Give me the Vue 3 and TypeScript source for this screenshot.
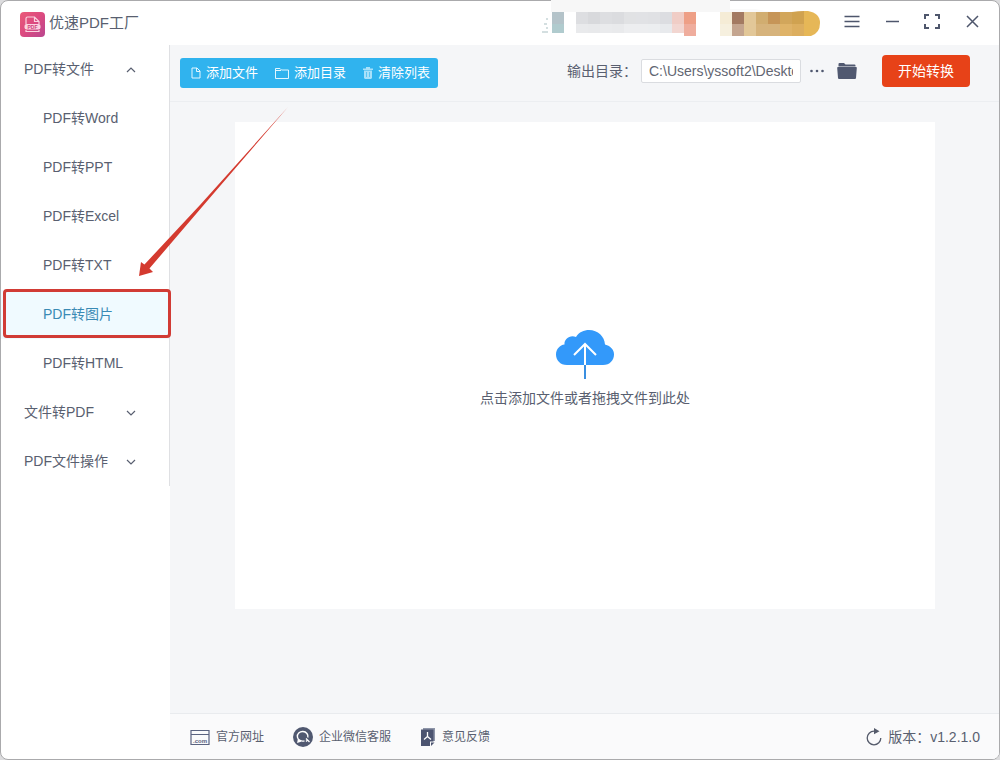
<script setup lang="ts">
import { ref } from 'vue'

interface NavGroup {
  title: string
  open: boolean
  items: string[]
}

interface Tile {
  x: number
  top: string
  bottom: string
}

const groups = ref<NavGroup[]>([
  {
    title: 'PDF转文件',
    open: true,
    items: ['PDF转Word', 'PDF转PPT', 'PDF转Excel', 'PDF转TXT', 'PDF转图片', 'PDF转HTML'],
  },
  { title: '文件转PDF', open: false, items: [] },
  { title: 'PDF文件操作', open: false, items: [] },
])
const active = ref('PDF转图片')
const outputDir = ref('C:\\Users\\yssoft2\\Desktop')

const nameTiles: Tile[] = [
  { x: 36, top: '#dddee1', bottom: '#e9eaec' },
  { x: 48, top: '#d8d9dc', bottom: '#e8e9eb' },
  { x: 60, top: '#dddee1', bottom: '#eaebed' },
  { x: 72, top: '#dbdcdf', bottom: '#e9eaec' },
  { x: 84, top: '#e1e2e4', bottom: '#edeef0' },
  { x: 96, top: '#e1e2e5', bottom: '#edeef0' },
  { x: 108, top: '#e0e1e4', bottom: '#eceef0' },
  { x: 120, top: '#dcdde1', bottom: '#e8eaed' },
  { x: 132, top: '#f0cdc6', bottom: '#f2d6d1' },
  { x: 144, top: '#ee9f86', bottom: '#efad9d' },
]
const badgeTiles: Tile[] = [
  { x: 180, top: '#f5ecd6', bottom: '#f6f0df' },
  { x: 192, top: '#a37a62', bottom: '#c4a58f' },
  { x: 204, top: '#e2c798', bottom: '#e2c798' },
  { x: 216, top: '#d1ad70', bottom: '#d6b37c' },
  { x: 228, top: '#c69558', bottom: '#d6b37c' },
  { x: 240, top: '#d2a65b', bottom: '#dfb368' },
  { x: 252, top: '#d0a250', bottom: '#dcae5f' },
]
</script>

<template>
  <div class="desktop">
    <div class="window">
      <header class="titlebar">
        <svg class="logo" width="25" height="25" viewBox="0 0 25 25" aria-hidden="true">
          <defs>
            <linearGradient id="logo-fill" x1="0" y1="0" x2="1" y2="1">
              <stop offset="0" stop-color="#ea5a78" />
              <stop offset="0.5" stop-color="#dc4a80" />
              <stop offset="1" stop-color="#b8468f" />
            </linearGradient>
          </defs>
          <rect width="25" height="25" rx="4" fill="url(#logo-fill)" />
          <path d="M6 12V6.500Q6 5 7.500 5H14.500L19 9.500V12M14.500 5V9.500H19M6 18V19.500H19V18" fill="none" stroke="#fbd3e0" stroke-width="1.200" />
          <rect x="4.500" y="12" width="16" height="5.500" rx="2" fill="#fbd3e0" />
          <text x="12.500" y="16.700" text-anchor="middle" font-family="Liberation Sans, sans-serif" font-size="5" font-weight="bold" fill="#cf3f78">PDF</text>
        </svg>
        <h1 class="app-name">优速PDF工厂</h1>
        <svg class="account" width="282" height="44" viewBox="0 0 282 44" aria-hidden="true">
          <path d="M11 0H190V12H11Z" fill="#f7f7f7" />
          <path d="M190 9H215L232 12H190Z" fill="#fafafa" />
          <path d="M6 19H8M4 24H7M6 28H8M2 32H8" stroke="#a9bfc2" fill="none" />
          <rect x="12" y="12" width="12" height="12" fill="#b4c3c9" />
          <rect x="12" y="24" width="12" height="9" fill="#b0cbce" />
          <g v-for="t in nameTiles" :key="t.x">
            <rect :x="t.x" y="12" width="12" height="12" :fill="t.top" />
            <rect :x="t.x" y="24" width="12" :height="t.x === 144 ? 12 : 9" :fill="t.bottom" />
          </g>
          <g v-for="t in badgeTiles" :key="t.x">
            <rect :x="t.x" y="12" width="12" height="12" :fill="t.top" />
            <rect :x="t.x" y="24" width="12" height="12" :fill="t.bottom" />
          </g>
          <path d="M264 11H268Q280 13 280 23Q280 33 271 36H264Z" fill="#e6b757" />
          <path d="M252 12Q258 11 264 11V24H252Z" fill="#d0a250" />
        </svg>
        <div class="win-controls">
          <button type="button" aria-label="菜单">
            <svg width="16" height="16" viewBox="0 0 16 16"><path d="M0.500 3.500H15.500M0.500 8.500H15.500M0.500 13.500H15.500" /></svg>
          </button>
          <button type="button" aria-label="最小化">
            <svg width="16" height="16" viewBox="0 0 16 16"><path d="M2 8.500H15" /></svg>
          </button>
          <button type="button" aria-label="最大化">
            <svg width="16" height="16" viewBox="0 0 16 16"><path class="thick" d="M1 6V2H5M11 2H15V6M15 11V15H11M5 15H1V11" /></svg>
          </button>
          <button type="button" aria-label="关闭">
            <svg width="16" height="16" viewBox="0 0 16 16"><path d="M3 3L14 14M14 3L3 14" /></svg>
          </button>
        </div>
      </header>

      <div class="body">
        <aside class="sidebar">
          <nav class="nav">
            <template v-for="g in groups" :key="g.title">
              <button type="button" class="nav-group" :aria-expanded="g.open" @click="g.open = !g.open">
                <span>{{ g.title }}</span>
                <svg width="10" height="10" viewBox="0 0 10 10" aria-hidden="true">
                  <path :d="g.open ? 'M1 8L5 4L9 8' : 'M1 4L5 8L9 4'" />
                </svg>
              </button>
              <template v-if="g.open">
                <button
                  v-for="item in g.items"
                  :key="item"
                  type="button"
                  class="nav-item"
                  :class="{ active: item === active }"
                  @click="active = item"
                >
                  {{ item }}
                </button>
              </template>
            </template>
          </nav>
        </aside>

        <main class="main">
          <div class="toolbar">
            <div class="actions">
              <button type="button">
                <svg width="10" height="12" viewBox="0 0 10 12" aria-hidden="true"><path d="M1 1H6L9 4V11H1ZM5.500 1V4.500H9" /></svg>
                添加文件
              </button>
              <button type="button">
                <svg width="14" height="12" viewBox="0 0 14 12" aria-hidden="true"><path d="M0.500 11.500V1.500H5L6.500 3H13.500V11.500ZM0.500 3.500H6" /></svg>
                添加目录
              </button>
              <button type="button">
                <svg width="10" height="12" viewBox="0 0 10 12" aria-hidden="true"><path class="bin" d="M3 0H7V1.500H10V3H0V1.500H3ZM1 3.500H9V11L8 12H2L1 11Z" /><path class="bars" d="M3.500 5V10M6.500 5V10" /></svg>
                清除列表
              </button>
            </div>
            <div class="output">
              <label for="output-dir">输出目录：</label>
              <input id="output-dir" v-model="outputDir" type="text" />
              <button type="button" class="icon-btn dots" aria-label="选择目录">
                <svg width="16" height="4" viewBox="0 0 16 4"><circle cx="2.500" cy="2" r="1.300" /><circle cx="8" cy="2" r="1.300" /><circle cx="13.500" cy="2" r="1.300" /></svg>
              </button>
              <button type="button" class="icon-btn" aria-label="打开目录">
                <svg width="20" height="18" viewBox="0 0 20 18"><path d="M1.500 4.500V2Q1.500 1 2.500 1H7L8.500 2.500H17.500Q18.500 2.500 18.500 3.500V4.500Z" /><path d="M1 5H19Q20 5 19.800 6L19 16Q18.900 17 18 17H2Q1.100 17 1 16L0.200 6Q0.100 5 1 5Z" /></svg>
              </button>
            </div>
            <button type="button" class="start">开始转换</button>
          </div>

          <section class="stage">
            <button type="button" class="dropzone">
              <svg width="58" height="51" viewBox="0 0 58 51" aria-hidden="true">
                <path d="M11 36C4 36 0 31 0 25.500C0 20 4 16 8.500 15.500C8 10 14 5.500 20 8C23 3 28 1 33 1C42 1 48.500 7.500 49 15.500C55 17 58 21 58 25.500C58 31 54 36 47 36Z" fill="#3399fa" />
                <path d="M29 15V36M18 26L29 15L40 26" fill="none" stroke="#fff" stroke-width="2" />
                <path d="M29 36V50" stroke="#3b8fe0" stroke-width="2" />
              </svg>
              <span>点击添加文件或者拖拽文件到此处</span>
            </button>
          </section>

          <footer class="footer">
            <a href="#site">
              <svg width="20" height="20" viewBox="0 0 20 20" aria-hidden="true">
                <path d="M1 3.500H19V17.500H1ZM1 7.500H19" fill="none" stroke="#5a6380" stroke-width="1.200" />
                <text x="10" y="15.500" text-anchor="middle" font-family="Liberation Sans, sans-serif" font-size="6" font-weight="bold" fill="#5a6380">.com</text>
              </svg>
              <span>官方网址</span>
            </a>
            <a href="#wecom">
              <svg width="20" height="20" viewBox="0 0 20 20" aria-hidden="true">
                <circle cx="10" cy="10" r="10" fill="#505870" />
                <path d="M11.500 13.800A5.300 4.800 0 1 1 14.800 10.500M5.500 12.500L5 15L7.800 14" fill="none" stroke="#fff" stroke-width="1.400" />
                <path d="M13 11.500L16.500 15M13 14.500L14.500 13" stroke="#fff" stroke-width="1.300" />
              </svg>
              <span>企业微信客服</span>
            </a>
            <a href="#feedback">
              <svg width="16" height="20" viewBox="0 0 16 20" aria-hidden="true">
                <path d="M3 1H15V14H3Z" fill="#8e95a8" />
                <path d="M1 2.500H13.500V14.500H10V19H1Z" fill="#4c5470" />
                <path d="M11 15.500H14.500L11 19Z" fill="#4c5470" />
                <path d="M7.500 5V9.500L4 12.500M7.500 9.500L11 12.500" fill="none" stroke="#fff" stroke-width="1.300" />
              </svg>
              <span>意见反馈</span>
            </a>
            <div class="version">
              <svg width="16" height="18" viewBox="0 0 16 18" aria-hidden="true">
                <path d="M8 3.200A6.800 6.800 0 1 0 14.800 10" fill="none" stroke="#555b6b" stroke-width="1.300" />
                <path d="M8 0L13.500 3.200L8 6.200Z" fill="#555b6b" />
              </svg>
              <span>版本：v1.2.1.0</span>
            </div>
          </footer>
        </main>
      </div>
    </div>

    <svg class="pointer" width="152" height="170" viewBox="0 0 152 170" aria-hidden="true">
      <path d="M150 0L62 98L6 158L11 162L64 100Z" fill="#d43a2f" />
      <path d="M1 169L3 155L7 158L11 161L15 165Z" fill="#d43a2f" />
    </svg>
  </div>
</template>

<style>
body {
  margin: 0;
  background: #dcdcde;
}
</style>

<style scoped>
.desktop {
  position: relative;
  min-height: 100vh;
  display: flex;
  font-family: "Liberation Sans", "Noto Sans CJK SC", sans-serif;
  font-size: 14px;
  line-height: 20px;
  color: #595f70;
}
.window {
  flex: 1;
  display: flex;
  flex-direction: column;
  box-sizing: border-box;
  border: 1px solid #aaaaac;
  border-radius: 8px;
  background: #fff;
}
button {
  margin: 0;
  padding: 0;
  border: 0;
  background: none;
  font: inherit;
  color: inherit;
  cursor: pointer;
}
svg {
  display: block;
  flex: none;
}

.titlebar {
  display: flex;
  align-items: center;
  height: 44px;
  padding: 0 19px;
}
.logo {
  margin-top: 2px;
}
.app-name {
  margin: 0 auto 0 4px;
  font-size: 15px;
  font-weight: 400;
}
.account {
  margin-top: -2px;
}
.win-controls {
  display: flex;
  gap: 24px;
  margin: -4px 0 0 22px;
}
.win-controls svg {
  stroke: #4e566c;
  stroke-width: 1.5;
  fill: none;
}
.win-controls .thick {
  stroke-width: 2;
}

.body {
  flex: 1;
  display: flex;
}
.sidebar {
  flex: none;
  width: 169px;
}
.nav {
  display: flex;
  flex-direction: column;
  border-right: 1px solid #dfe0e3;
}
.nav-group,
.nav-item {
  height: 49px;
  padding: 0 0 2px 42px;
  text-align: left;
}
.nav-group {
  display: flex;
  align-items: center;
  justify-content: space-between;
  padding: 0 33px 2px 23px;
}
.nav-group svg {
  fill: none;
  stroke: #595f70;
  stroke-width: 1.2;
}
.nav-item.active {
  position: relative;
  background: #f0faff;
  color: #3a8ab5;
}
.nav-item.active::after {
  content: "";
  position: absolute;
  inset: -1px -2px 1px 2px;
  border: 3px solid #d13b35;
  border-radius: 4px;
}

.main {
  flex: 1;
  min-width: 0;
  display: flex;
  flex-direction: column;
  background: #f5f6f8;
  border-bottom-right-radius: 7px;
}
.toolbar {
  display: flex;
  align-items: center;
  height: 52px;
  padding: 0 29px 4px 10px;
  border-bottom: 1px solid #eceef1;
}
.actions {
  display: flex;
  gap: 17px;
  height: 30px;
  margin-top: 4px;
  padding: 0 8px 0 11px;
  border-radius: 3px;
  background: #30b3ee;
  color: #fff;
  font-size: 13px;
}
.actions button {
  display: flex;
  align-items: center;
  gap: 5px;
}
.actions path {
  fill: none;
  stroke: #e2f6ff;
}
.actions .bin {
  fill: #a9e1fa;
  stroke: none;
}
.actions .bars {
  stroke: #5fc5f2;
}
.output {
  display: flex;
  align-items: center;
  margin-left: auto;
}
.output label {
  margin-right: 4px;
}
.output input {
  box-sizing: border-box;
  width: 160px;
  height: 24px;
  padding: 0 7px;
  border: 1px solid #dadce0;
  border-radius: 2px;
  background: #fff;
  color: #626672;
  font: inherit;
}
.icon-btn {
  margin-left: 12px;
  fill: #505870;
}
.icon-btn.dots {
  margin-left: 8px;
}
.start {
  width: 88px;
  height: 32px;
  margin-left: 25px;
  border-radius: 4px;
  background: #e74218;
  color: #fff;
}

.stage {
  flex: 1;
  display: flex;
  padding: 20px 64px 104px 65px;
}
.dropzone {
  flex: 1;
  display: flex;
  flex-direction: column;
  align-items: center;
  justify-content: center;
  gap: 8px;
  padding-top: 6px;
  background: #fff;
}

.footer {
  display: flex;
  align-items: center;
  gap: 29px;
  height: 45px;
  padding: 0 19px 0 20px;
  border-top: 1px solid #e9ebee;
  border-bottom-right-radius: 7px;
  background: #fafafb;
}
.footer a {
  display: flex;
  align-items: center;
  gap: 6px;
  color: inherit;
  font-size: 12px;
  text-decoration: none;
}
.version {
  display: flex;
  align-items: center;
  gap: 6px;
  margin-left: auto;
}
.pointer {
  position: absolute;
  left: 138px;
  top: 107px;
  pointer-events: none;
}
</style>
